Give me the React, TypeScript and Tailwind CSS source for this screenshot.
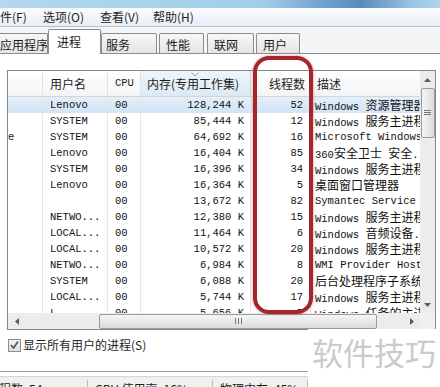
import React from 'react';

type Row = { user: string; mem: string; threads: string; desc: string; pre?: string; sel?: boolean };

const rows: Row[] = [
  { user: 'Lenovo', mem: '128,244 K', threads: '52', desc: 'Windows 资源管理器', sel: true },
  { user: 'SYSTEM', mem: '85,444 K', threads: '12', desc: 'Windows 服务主进程' },
  { user: 'SYSTEM', mem: '64,692 K', threads: '16', desc: 'Microsoft Windows', pre: 'e' },
  { user: 'Lenovo', mem: '16,404 K', threads: '85', desc: '360安全卫士 安全...' },
  { user: 'SYSTEM', mem: '16,396 K', threads: '34', desc: 'Windows 服务主进程' },
  { user: 'Lenovo', mem: '16,364 K', threads: '5', desc: '桌面窗口管理器' },
  { user: '', mem: '13,672 K', threads: '82', desc: 'Symantec Service ...' },
  { user: 'NETWO...', mem: '12,380 K', threads: '15', desc: 'Windows 服务主进程' },
  { user: 'LOCAL...', mem: '11,464 K', threads: '6', desc: 'Windows 音频设备...' },
  { user: 'LOCAL...', mem: '10,572 K', threads: '20', desc: 'Windows 服务主进程' },
  { user: 'NETWO...', mem: '6,984 K', threads: '8', desc: 'WMI Provider Host' },
  { user: 'SYSTEM', mem: '6,088 K', threads: '20', desc: '后台处理程序子系统' },
  { user: 'LOCAL...', mem: '5,744 K', threads: '17', desc: 'Windows 服务主进程' },
  { user: 'L...', mem: '5,656 K', threads: '5', desc: 'Windows 任务的主进程' },
];

// latin runs stay in the mono face, CJK runs get a real CJK font at 12px
function Mixed({ text }: { text: string }) {
  const parts = text.match(/[\x00-\xff]+|[^\x00-\xff]+/g) || [];
  return (
    <>
      {parts.map((p, i) =>
        /[^\x00-\xff]/.test(p) ? (
          <span key={i} className="font-['Noto_Sans_CJK_SC',sans-serif] text-[12px]">{p}</span>
        ) : (
          <span key={i}>{p}</span>
        )
      )}
    </>
  );
}

const Arrow = ({ dir }: { dir: 'up' | 'down' | 'left' | 'right' }) => {
  const pts = {
    up: '0,4 3.5,0 7,4',
    down: '0,0 3.5,4 7,0',
    left: '4,0 0,3.5 4,7',
    right: '0,0 4,3.5 0,7',
  }[dir];
  const v = dir === 'up' || dir === 'down';
  return (
    <svg width={v ? 7 : 4} height={v ? 4 : 7} viewBox={v ? '0 0 7 4' : '0 0 4 7'}>
      <polygon points={pts} fill="#5c5c5c" />
    </svg>
  );
};

const Tab = ({ label, w, ml, pl, selected }: { label: string; w: string; ml: string; pl: string; selected?: boolean }) => (
  <div
    className={`${w} ${ml} ${pl} flex shrink-0 items-center overflow-hidden whitespace-nowrap rounded-t-[2px] border border-[#898c95] text-[12px] text-[#1a1a1a] ${
      selected
        ? 'relative z-10 mb-[-1px] h-[25px] border-b-0 bg-white pb-[1px]'
        : 'h-[20px] border-b-0 bg-[linear-gradient(#f7f7f7,#e4e4e4)] pt-[3px]'
    }`}
  >
    {label}
  </div>
);

export default function App() {
  return (
    <div className="relative h-[387px] w-[440px] overflow-hidden bg-white font-['Noto_Sans_CJK_SC',sans-serif] text-black">
      {/* window title strip */}
      <div className="h-[8px] bg-[linear-gradient(90deg,#b3d8ef_0%,#a2cdea_60%,#6f9fcd_74%,#5a8bbd_82%,#9cc5e4_94%,#b0d4ec_100%)]" />

      {/* menu bar */}
      <div className="flex h-[19px] items-center whitespace-nowrap border-b border-[#b7c0cb] bg-[linear-gradient(#fbfcfe,#e9eef5)] text-[12px] text-[#1e1e1e]">
        <span className="ml-[-12px] w-[55px] shrink-0">文件(F)</span>
        <span className="w-[57px] shrink-0">选项(O)</span>
        <span className="w-[53px] shrink-0">查看(V)</span>
        <span>帮助(H)</span>
      </div>

      {/* tabs */}
      <div className="flex h-[27px] items-end border-b border-[#898c95] bg-[#f4f5f6]">
        <Tab label="应用程序" w="w-[56px]" ml="ml-[-8px]" pl="pl-[7px]" />
        <Tab label="进程" w="w-[53px]" ml="ml-0" pl="pl-[8px]" selected />
        <Tab label="服务" w="w-[56px]" ml="ml-0" pl="pl-[4px]" />
        <Tab label="性能" w="w-[45px]" ml="ml-[2px]" pl="pl-[6px]" />
        <Tab label="联网" w="w-[47px]" ml="ml-[3px]" pl="pl-[6px]" />
        <Tab label="用户" w="w-[44px]" ml="ml-[2px]" pl="pl-[6px]" />
      </div>

      {/* process list */}
      <div className="ml-[7px] mt-[16px] flex h-[260px] w-[429px] border border-[#828790] bg-white">
        <div className="flex w-[412px] flex-col">
          {/* header */}
          <div className="flex h-[26px] whitespace-nowrap border-b border-[#d5d5d5] bg-[linear-gradient(#ffffff,#f3f4f6)] text-[12px] text-[#1c1c1c]">
            <div className="w-[35px] border-r border-[#dfe3e8]" />
            <div className="flex w-[65px] items-center border-r border-[#dfe3e8] pl-[7px]">用户名</div>
            <div className="flex w-[33px] items-center border-r border-[#dfe3e8] pl-[7px] font-['Liberation_Mono',monospace] text-[10.5px]">CPU</div>
            <div className="relative flex w-[110px] items-center border-r border-[#c6d9ea] bg-[linear-gradient(#eef5fb,#dce9f4)] pl-[6px]">
              内存(专用工作集)
              <svg className="absolute left-[50px] top-[1px]" width="8" height="5" viewBox="0 0 8 5">
                <polyline points="0.5,0.5 4,4 7.5,0.5" fill="none" stroke="#8ca2b8" strokeWidth="1" />
              </svg>
            </div>
            <div className="flex w-[60px] items-center justify-end border-r border-[#dfe3e8] pr-[5px]">线程数</div>
            <div className="flex w-[109px] items-center pl-[6px]">描述</div>
          </div>

          {/* rows */}
          <div className="h-[216px] overflow-hidden font-['Liberation_Mono','Noto_Sans_CJK_SC',monospace] text-[10.5px] text-[#111]">
            {rows.map((r, i) => (
              <div key={i} className={`flex h-[16px] items-center ${r.sel ? 'bg-[linear-gradient(#e3effa,#d2e4f5)]' : ''}`}>
                <div className="h-full w-[35px] border-r border-[#e6e6e6] leading-[16px]">{r.pre}</div>
                <div className="h-full w-[65px] border-r border-[#e6e6e6] pl-[7px] leading-[16px]">{r.user}</div>
                <div className="h-full w-[33px] border-r border-[#e6e6e6] pl-[7px] leading-[16px]">00</div>
                <div className="h-full w-[110px] border-r border-[#e6e6e6] pr-[6px] text-right leading-[16px]">{r.mem}</div>
                <div className="h-full w-[60px] border-r border-[#e6e6e6] pr-[7px] text-right leading-[16px]">{r.threads}</div>
                <div className="h-full w-[109px] overflow-hidden whitespace-nowrap pl-[4px] leading-[16px]">
                  <Mixed text={r.desc} />
                </div>
              </div>
            ))}
          </div>

          {/* horizontal scrollbar */}
          <div className="flex h-[16px] items-center bg-[#ececec]">
            <div className="flex w-[17px] justify-center"><Arrow dir="left" /></div>
            <div className="w-[74px]" />
            <div className="flex h-[15px] w-[278px] items-center justify-center rounded-[2px] border border-[#9c9c9c] bg-[linear-gradient(#f6f6f6,#dadada)]">
              <svg width="7" height="6" viewBox="0 0 7 6">
                <path d="M0.5 0V6M3.5 0V6M6.5 0V6" stroke="#777" strokeWidth="1" />
              </svg>
            </div>
            <div className="flex-1" />
            <div className="flex w-[17px] justify-center"><Arrow dir="right" /></div>
          </div>
        </div>

        {/* vertical scrollbar + corner */}
        <div className="flex w-[15px] flex-col bg-[#ececec]">
          <div className="flex h-[17px] items-center justify-center"><Arrow dir="up" /></div>
          <div className="mx-auto flex h-[50px] w-[14px] items-center justify-center rounded-[2px] border border-[#9c9c9c] bg-[linear-gradient(90deg,#f6f6f6,#dadada)]">
            <svg width="7" height="6" viewBox="0 0 7 6">
              <path d="M0 0.5H7M0 2.5H7M0 4.5H7" stroke="#777" strokeWidth="1" />
            </svg>
          </div>
          <div className="flex-1" />
          <div className="flex h-[17px] items-center justify-center"><Arrow dir="down" /></div>
          <div className="h-[16px] bg-[#f0f0f0]" />
        </div>
      </div>

      {/* show all users */}
      <div className="ml-[8px] mt-[8px] flex h-[14px] items-center gap-[2px] text-[12px] text-[#1e1e1e]">
        <div className="flex h-[13px] w-[13px] items-center justify-center border border-[#8f8f8f] bg-[linear-gradient(#f2f2f2,#e0e0e0)]">
          <svg width="9" height="8" viewBox="0 0 9 8">
            <polyline points="1,4 3.5,7 8,0.5" fill="none" stroke="#4b5f7d" strokeWidth="1.8" />
          </svg>
        </div>
        <span>显示所有用户的进程(S)</span>
      </div>

      {/* status bar */}
      <div className="mt-[19px] h-[1px] bg-[#a0a0a0]" />
      <div className="mt-[4px] flex h-[20px] whitespace-nowrap border-t border-[#d4d4d4] bg-[#f0f0f0] pt-[3px] text-[12px] text-[#1e1e1e]">
        <div className="ml-[-13px] w-[101px] shrink-0 border-r border-[#bdbdbd]">进程数: 54</div>
        <div className="w-[125px] shrink-0 border-r border-[#bdbdbd] pl-[7px]">CPU 使用率: 16%</div>
        <div className="w-[95px] shrink-0 border-r border-[#bdbdbd] pl-[7px]">物理内存: 45%</div>
      </div>

      {/* red annotation around the thread column */}
      <div className="pointer-events-none absolute left-[253px] top-[56px] h-[258px] w-[60px] rounded-[16px] border-[4px] border-[#a3262c] shadow-[0_0_3px_rgba(190,60,70,0.6)]" />

      {/* watermark */}
      <div className="absolute bottom-0 left-[308px] right-0 top-[329px] bg-white pl-[4px] pt-[3px] text-[31px] leading-[40px] text-[#cacaca]">
        软件技巧
      </div>
    </div>
  );
}
